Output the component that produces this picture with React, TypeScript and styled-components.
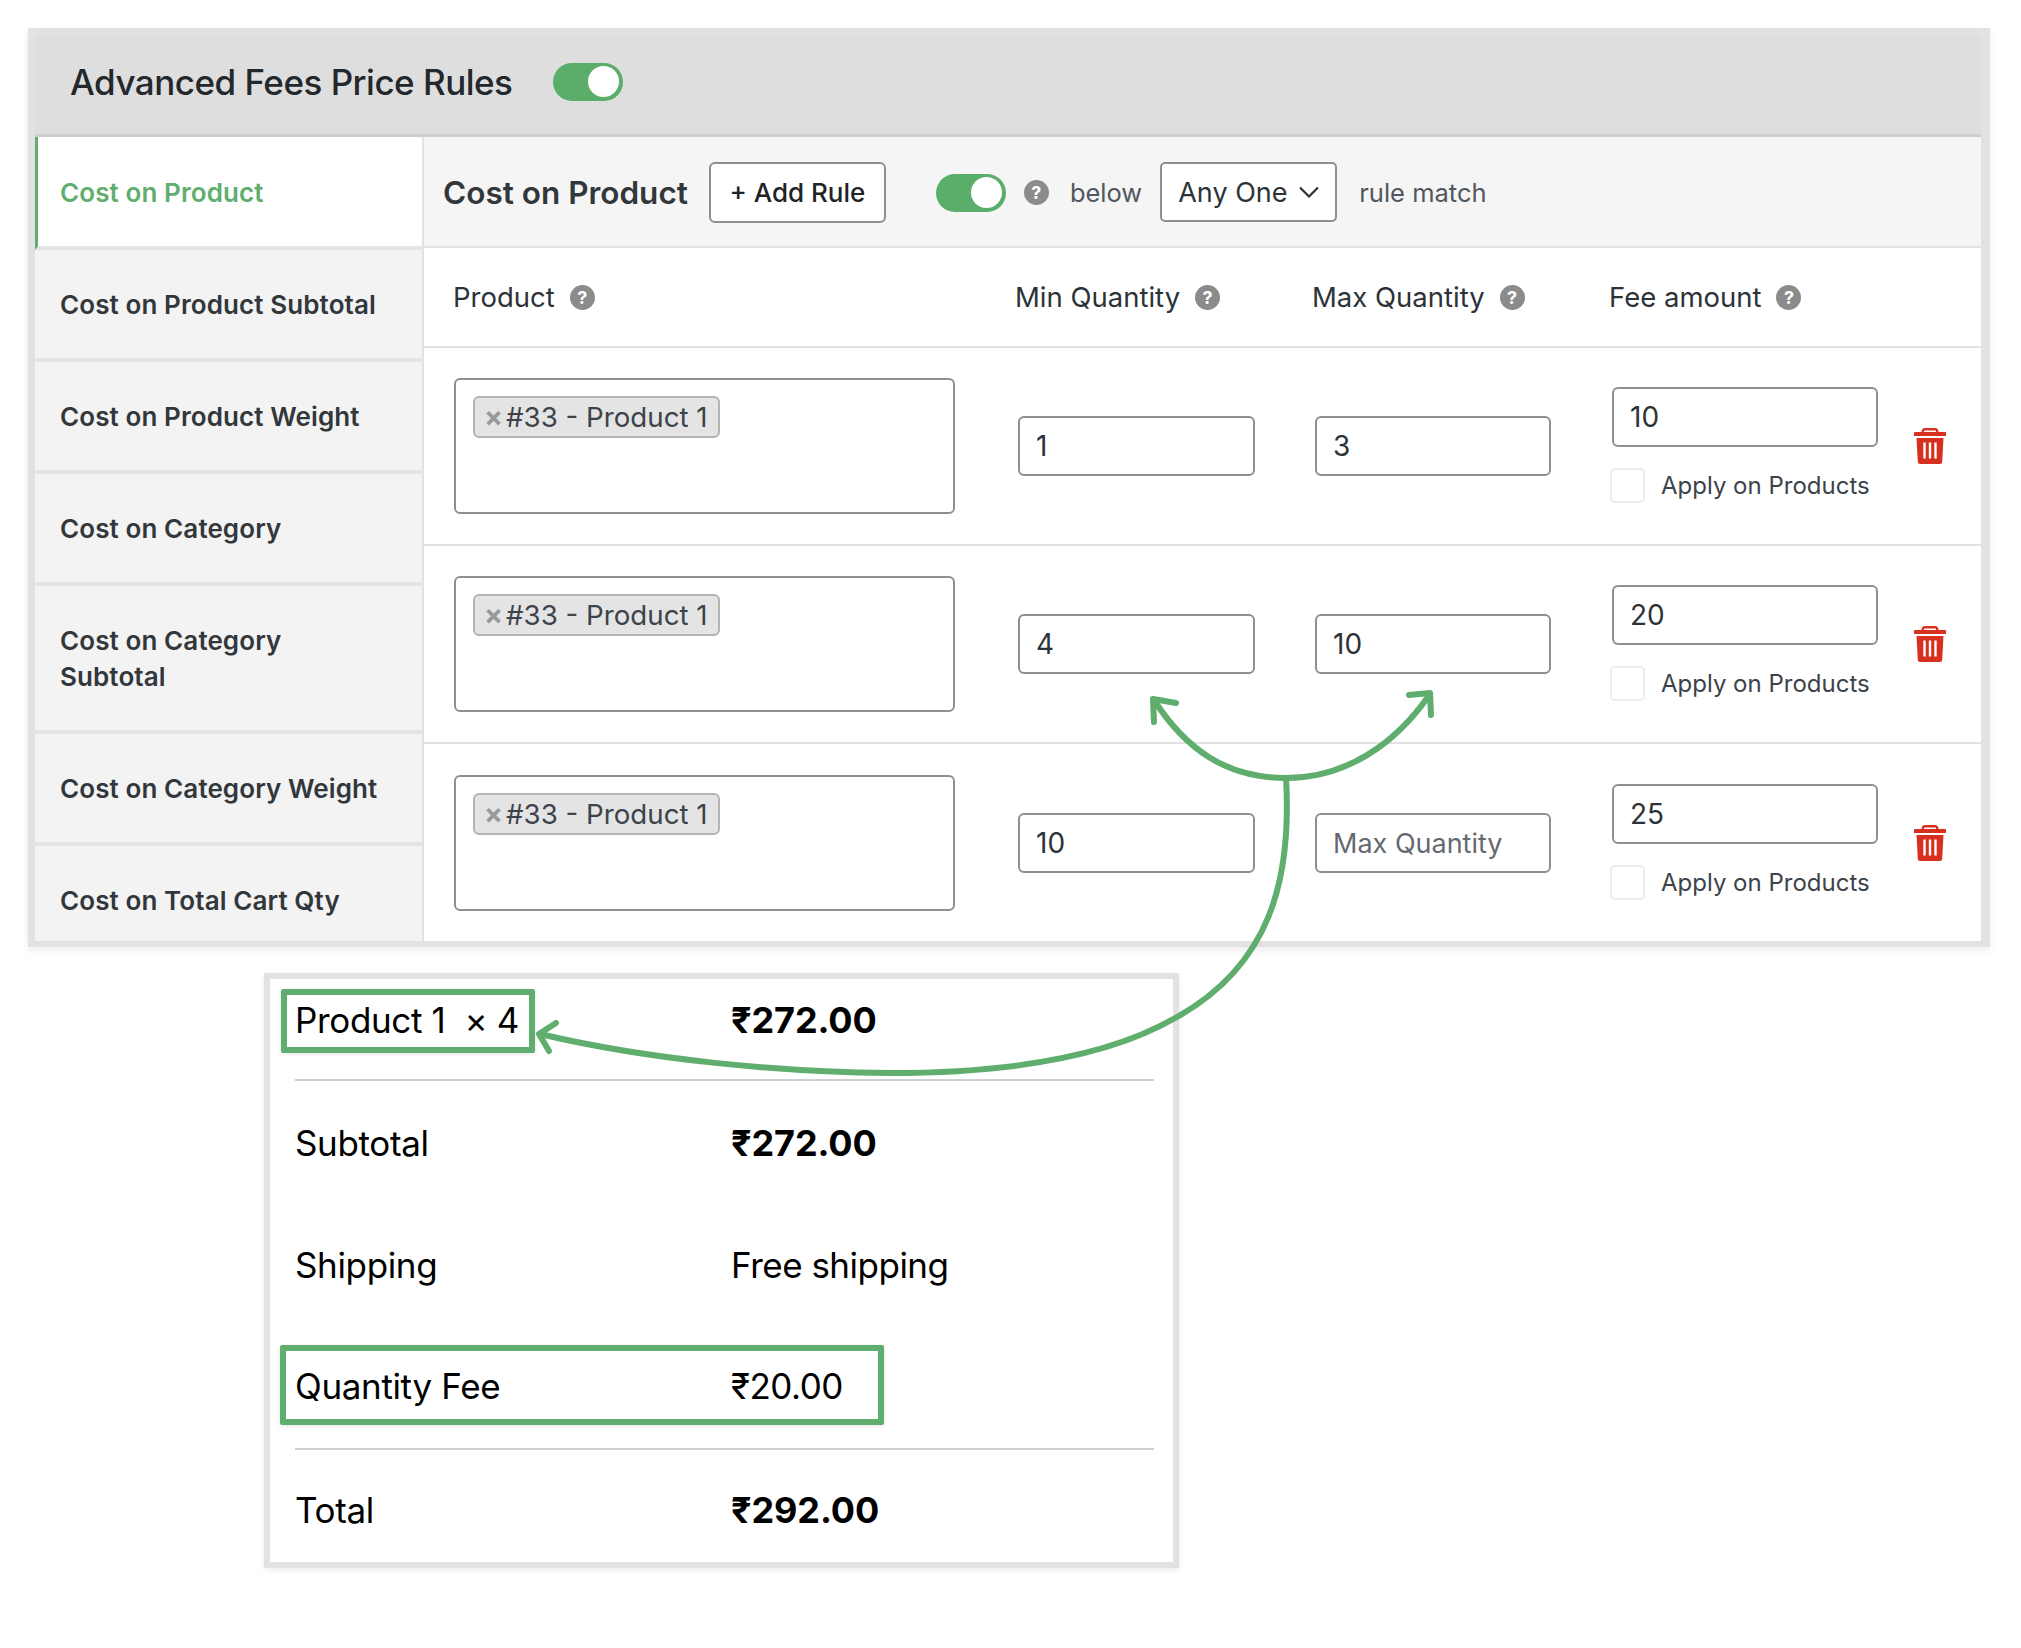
import React from 'react';
import styled, { createGlobalStyle } from 'styled-components';

const Global = createGlobalStyle`
  html, body { margin: 0; padding: 0; background: #fff; }
  body { font-family: Inter, "Liberation Sans", sans-serif; color: #2c3338; }
  * { box-sizing: border-box; }
`;

const GREEN = '#5fae6e';

const Page = styled.div`
  position: relative;
  width: 2021px;
  height: 1648px;
  padding: 28px 0 0 28px;
  overflow: hidden;
`;
const Panel = styled.section`
  width: 1962px;
  border-style: solid;
  border-color: #e2e2e2;
  border-width: 8px 9px 6px 7px;
  box-shadow: 0 3px 8px rgba(0, 0, 0, 0.08);
`;
const PanelHead = styled.header`
  height: 101px;
  padding-bottom: 7px;
  background: #dedede;
  border-bottom: 3px solid #cdcdcd;
  display: flex;
  align-items: center;
  padding-left: 35px;
  gap: 41px;
`;
const PanelTitle = styled.h1`
  margin: 0;
  font-size: 35px;
  font-weight: 500;
  letter-spacing: -0.5px;
  color: #23282d;
`;
const Switch = styled.span`
  display: inline-flex;
  justify-content: flex-end;
  align-items: center;
  flex: none;
  width: 70px;
  height: 38px;
  padding: 4px;
  border-radius: 19px;
  background: #5aae6a;
  &::after {
    content: '';
    width: 31px;
    height: 31px;
    border-radius: 50%;
    background: #fff;
  }
`;
const PanelBody = styled.div`
  display: grid;
  grid-template-columns: 389px 1fr;
  height: 804px;
  overflow: hidden;
`;
const Sidebar = styled.nav`
  display: flex;
  flex-direction: column;
  background: #f3f3f3;
  border-right: 2px solid #e2e2e2;
`;
const SideItem = styled.div<{ $active?: boolean }>`
  flex: none;
  padding: ${p => (p.$active ? '38px 38px 35px 22px' : '37px 38px 35px 25px')};
  border-left: ${p => (p.$active ? `3px solid ${GREEN}` : '0')};
  background: ${p => (p.$active ? '#fff' : '#f3f3f3')};
  color: ${p => (p.$active ? GREEN : '#32373c')};
  font-size: 26px;
  line-height: 36px;
  font-weight: 600;
  letter-spacing: 0.1px;
  border-bottom: 4px solid #e4e4e4;
`;
const Main = styled.div`
  display: flex;
  flex-direction: column;
  background: #fff;
  min-width: 0;
`;
const Toolbar = styled.div`
  display: flex;
  align-items: center;
  height: 111px;
  padding: 2px 0 0 19px;
  background: #f5f5f5;
  border-bottom: 2px solid #e2e2e2;
`;
const ToolTitle = styled.h2`
  margin: 0 21px 0 0;
  font-size: 31.5px;
  font-weight: 600;
  color: #32373c;
`;
const AddButton = styled.button`
  width: 177px;
  height: 61px;
  margin-right: 50px;
  background: #fff;
  border: 2px solid #8c8f94;
  border-radius: 6px;
  font: 500 26px Inter, sans-serif;
  color: #1d2327;
`;
const Help = styled.span<{ $gap?: number }>`
  display: inline-flex;
  align-items: center;
  justify-content: center;
  flex: none;
  width: 25px;
  height: 25px;
  border-radius: 50%;
  background: #8b8b8b;
  color: #fff;
  font-size: 18px;
  font-weight: 700;
  margin-left: ${p => p.$gap ?? 0}px;
`;
const ToolText = styled.span<{ $left: number }>`
  margin-left: ${p => p.$left}px;
  font-size: 25.5px;
  color: #50575e;
`;
const Select = styled.div`
  display: flex;
  align-items: center;
  justify-content: space-between;
  width: 177px;
  height: 60px;
  margin: -1px 0 0 18px;
  padding: 0 16px 0 16px;
  background: #fff;
  border: 2px solid #8c8f94;
  border-radius: 5px;
  font-size: 27px;
  color: #2c3338;
`;
const Grid = styled.div`
  display: grid;
  grid-template-columns: 562px 297px 297px 304px 1fr;
  padding-left: 30px;
  align-items: center;
`;
const HeadRow = styled(Grid)`
  height: 100px;
  padding-left: 29px;
  border-bottom: 2px solid #e2e2e2;
`;
const HeadCell = styled.div`
  display: flex;
  align-items: center;
  gap: 15px;
  font-size: 27.5px;
  color: #2c3338;
`;
const Row = styled(Grid)`
  flex: none;
  height: 198px;
  border-bottom: 2px solid #e2e2e2;
  &:last-child {
    border-bottom: 0;
  }
`;
const ProductBox = styled.div`
  width: 501px;
  height: 136px;
  padding: 16px 17px;
  background: #fff;
  border: 2px solid #8c8f94;
  border-radius: 6px;
`;
const Tag = styled.span`
  display: flex;
  align-items: center;
  width: 247px;
  height: 42px;
  padding-left: 9px;
  gap: 3px;
  background: #e4e4e4;
  border: 2px solid #b4b4b4;
  border-radius: 6px;
  font-size: 27.7px;
  color: #3c434a;
  white-space: nowrap;
`;
const TagX = styled.span`
  color: #999;
  font-size: 28px;
  font-weight: 700;
  line-height: 1;
`;
const Field = styled.div<{ $w: number }>`
  display: flex;
  align-items: center;
  width: ${p => p.$w}px;
  height: 60px;
  margin-left: 2px;
  padding-left: 16px;
  background: #fff;
  border: 2px solid #8c8f94;
  border-radius: 6px;
  font-size: 28px;
  color: #2c3338;
`;
const Placeholder = styled.span`
  color: #646970;
  font-size: 27px;
`;
const FeeCell = styled.div`
  display: flex;
  flex-direction: column;
  gap: 20px;
  margin-bottom: 2px;
`;
const CheckRow = styled.label`
  display: flex;
  align-items: center;
  gap: 16px;
  height: 37px;
  font-size: 24px;
  color: #3c434a;
`;
const CheckBox = styled.span`
  width: 35px;
  height: 35px;
  background: #fff;
  border: 2px solid #ececec;
  border-radius: 5px;
`;
const Trash = styled.svg`
  display: block;
  width: 32px;
  height: 36px;
`;
const Card = styled.section`
  position: absolute;
  left: 264px;
  top: 973px;
  width: 915px;
  height: 595px;
  padding: 0 19px 0 25px;
  background: #fff;
  border: 6px solid #e2e2e2;
  box-shadow: 0 2px 6px rgba(0, 0, 0, 0.08);
  color: #000;
`;
const CardRow = styled.div<{ $h: number; $rule?: boolean; $pt?: number; $pb?: number }>`
  position: relative;
  display: grid;
  grid-template-columns: 436px 1fr;
  align-items: center;
  height: ${p => p.$h}px;
  padding: ${p => p.$pt ?? 0}px 0 ${p => p.$pb ?? 0}px;
  font-size: 35px;
  letter-spacing: -0.35px;
  border-bottom: ${p => (p.$rule ? '2px solid #cfcfcf' : '0')};
`;
const Amount = styled.span<{ $bold?: boolean }>`
  font-weight: ${p => (p.$bold ? 700 : 400)};
  font-size: ${p => (p.$bold ? 36 : 35)}px;
  letter-spacing: ${p => (p.$bold ? -0.1 : -0.5)}px;
`;
const Highlight = styled.span<{ $left: number; $top: number; $w: number; $h: number }>`
  position: absolute;
  left: ${p => p.$left}px;
  top: ${p => p.$top}px;
  width: ${p => p.$w}px;
  height: ${p => p.$h}px;
  border: 6px solid ${GREEN};
  border-radius: 2px;
  box-shadow: 0 1px 4px rgba(0, 0, 0, 0.12);
`;
const Arrows = styled.svg`
  position: absolute;
  left: 0;
  top: 0;
  width: 2021px;
  height: 1648px;
  pointer-events: none;
`;

const sideItems = [
  'Cost on Product',
  'Cost on Product Subtotal',
  'Cost on Product Weight',
  'Cost on Category',
  'Cost on Category Subtotal',
  'Cost on Category Weight',
  'Cost on Total Cart Qty',
];

const rules = [
  { min: '1', max: '3', fee: '10' },
  { min: '4', max: '10', fee: '20' },
  { min: '10', max: '', fee: '25' },
];

const TrashIcon = () => (
  <Trash viewBox="0 0 32 36">
    <path
      fill="#d8301f"
      fillRule="evenodd"
      d="M11 0h10c2 0 3.500 1.500 3.500 4h6.500a1 1 0 0 1 1 1v3H0V5a1 1 0 0 1 1-1h6.500C7.500 1.500 9 0 11 0Zm0 2.500c-.8 0-1 .7-1.200 1.500h12.400c-.2-.8-.4-1.500-1.200-1.500H11ZM2.500 10h27l-1.300 23.500a2.500 2.500 0 0 1-2.500 2.500H6.300a2.500 2.500 0 0 1-2.500-2.500L2.500 10Zm6.800 4.500v16h2.400v-16H9.300Zm5.500 0v16h2.400v-16h-2.400Zm5.500 0v16h2.400v-16h-2.400Z"
    />
  </Trash>
);

export default function App() {
  return (
    <>
      <Global />
      <Page>
        <Panel>
          <PanelHead>
            <PanelTitle>Advanced Fees Price Rules</PanelTitle>
            <Switch />
          </PanelHead>
          <PanelBody>
            <Sidebar>
              {sideItems.map((s, i) => (
                <SideItem key={s} $active={i === 0}>
                  {s}
                </SideItem>
              ))}
            </Sidebar>
            <Main>
              <Toolbar>
                <ToolTitle>Cost on Product</ToolTitle>
                <AddButton>+ Add Rule</AddButton>
                <Switch />
                <Help $gap={18}>?</Help>
                <ToolText $left={21}>below</ToolText>
                <Select>
                  Any One
                  <svg width="20" height="12" viewBox="0 0 20 12" fill="none" stroke="#2c3338" strokeWidth="2.2">
                    <path d="M1 1.500l9 9 9-9" />
                  </svg>
                </Select>
                <ToolText $left={22}>rule match</ToolText>
              </Toolbar>
              <HeadRow>
                <HeadCell>Product <Help>?</Help></HeadCell>
                <HeadCell>Min Quantity <Help>?</Help></HeadCell>
                <HeadCell>Max Quantity <Help>?</Help></HeadCell>
                <HeadCell>Fee amount <Help>?</Help></HeadCell>
              </HeadRow>
              {rules.map(r => (
                <Row key={r.fee}>
                  <ProductBox>
                    <Tag>
                      <TagX>×</TagX>#33 - Product 1
                    </Tag>
                  </ProductBox>
                  <Field $w={237}>{r.min}</Field>
                  <Field $w={236}>{r.max || <Placeholder>Max Quantity</Placeholder>}</Field>
                  <FeeCell>
                    <Field $w={266}>{r.fee}</Field>
                    <CheckRow>
                      <CheckBox />
                      Apply on Products
                    </CheckRow>
                  </FeeCell>
                  <TrashIcon />
                </Row>
              ))}
            </Main>
          </PanelBody>
        </Panel>
        <Card>
          <CardRow $h={102} $pb={18} $rule>
            <span>Product 1&nbsp; × 4</span>
            <Amount $bold>₹272.00</Amount>
            <Highlight $left={-14} $top={10} $w={254} $h={64} />
          </CardRow>
          <CardRow $h={123}>
            <span>Subtotal</span>
            <Amount $bold>₹272.00</Amount>
          </CardRow>
          <CardRow $h={123} $pb={2}>
            <span>Shipping</span>
            <Amount>Free shipping</Amount>
          </CardRow>
          <CardRow $h={123} $pb={3} $rule>
            <span>Quantity Fee</span>
            <Amount>₹20.00</Amount>
            <Highlight $left={-15} $top={18} $w={604} $h={80} />
          </CardRow>
          <CardRow $h={112} $pt={8}>
            <span>Total</span>
            <Amount $bold>₹292.00</Amount>
          </CardRow>
        </Card>
        <Arrows viewBox="0 0 2021 1648" fill="none" stroke={GREEN} strokeWidth="6" strokeLinecap="round" strokeLinejoin="round">
          <path d="M1154 700C1185 748 1225 778 1286 778C1345 778 1395 745 1430 694" />
          <path d="M1154 722L1153 699L1176 703" />
          <path d="M1409 695L1430 693L1431 715" />
          <path d="M1286 778C1292 880 1270 965 1177 1017C1090 1068 960 1073 890 1073C780 1072 650 1060 540 1034" />
          <path d="M556 1023L539 1034L549 1051" />
        </Arrows>
      </Page>
    </>
  );
}
